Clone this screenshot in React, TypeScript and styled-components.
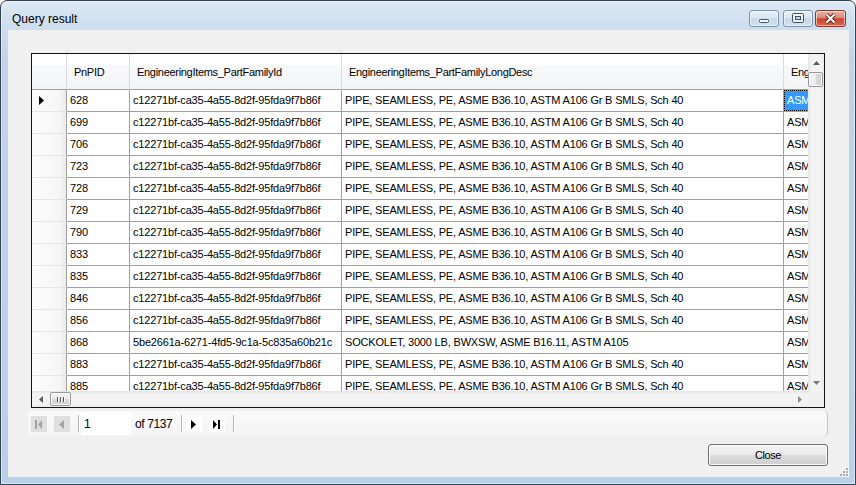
import React from 'react';
import styled, { createGlobalStyle } from 'styled-components';

const GlobalStyle = createGlobalStyle`
  html, body {
    margin: 0;
    padding: 0;
    background: #ffffff;
  }
  body {
    font-family: "Liberation Sans", Arial, sans-serif;
  }
  * {
    box-sizing: border-box;
  }
`;

const GUID_A = 'c12271bf-ca35-4a55-8d2f-95fda9f7b86f';
const GUID_B = '5be2661a-6271-4fd5-9c1a-5c835a60b21c';
const PIPE = 'PIPE, SEAMLESS, PE, ASME B36.10, ASTM A106 Gr B SMLS, Sch 40';
const SOCK = 'SOCKOLET, 3000 LB, BWXSW, ASME B16.11, ASTM A105';

const rows = [
  { id: '628', family: GUID_A, desc: PIPE, std: 'ASME B36.10' },
  { id: '699', family: GUID_A, desc: PIPE, std: 'ASME B36.10' },
  { id: '706', family: GUID_A, desc: PIPE, std: 'ASME B36.10' },
  { id: '723', family: GUID_A, desc: PIPE, std: 'ASME B36.10' },
  { id: '728', family: GUID_A, desc: PIPE, std: 'ASME B36.10' },
  { id: '729', family: GUID_A, desc: PIPE, std: 'ASME B36.10' },
  { id: '790', family: GUID_A, desc: PIPE, std: 'ASME B36.10' },
  { id: '833', family: GUID_A, desc: PIPE, std: 'ASME B36.10' },
  { id: '835', family: GUID_A, desc: PIPE, std: 'ASME B36.10' },
  { id: '846', family: GUID_A, desc: PIPE, std: 'ASME B36.10' },
  { id: '856', family: GUID_A, desc: PIPE, std: 'ASME B36.10' },
  { id: '868', family: GUID_B, desc: SOCK, std: 'ASME B16.11' },
  { id: '883', family: GUID_A, desc: PIPE, std: 'ASME B36.10' },
  { id: '885', family: GUID_A, desc: PIPE, std: 'ASME B36.10' },
];

const COLUMNS = '35px 63px 212px 442px 220px';

const Window = styled.div`
  width: 856px;
  height: 485px;
  display: flex;
  flex-direction: column;
  border: 1px solid #35424f;
  border-radius: 7px 7px 0 0;
  background: linear-gradient(180deg, #dde8f4 0px, #d0e0f0 20px, #bfd4ea 60px, #b9d1ea 100%);
  box-shadow: inset 0 0 0 1px rgba(255, 255, 255, 0.45);
  overflow: hidden;
`;

const TitleBar = styled.div`
  height: 29px;
  flex-shrink: 0;
  display: flex;
  align-items: flex-start;
  justify-content: space-between;
  padding: 0 9px 0 11px;
`;

const Title = styled.div`
  margin-top: 11px;
  font-size: 12px;
  line-height: 14px;
  color: #000000;
`;

const CaptionGroup = styled.div`
  display: flex;
  margin-top: 9px;
`;

const CaptionButton = styled.div<{ $close?: boolean; $gap?: number }>`
  width: ${({ $close }) => ($close ? 31 : 30)}px;
  height: 17px;
  margin-left: ${({ $gap }) => $gap ?? 0}px;
  border: 1px solid ${({ $close }) => ($close ? '#7a3b30' : '#7f93ab')};
  border-radius: 3px;
  background: ${({ $close }) =>
    $close
      ? 'linear-gradient(180deg, #eab1a5 0%, #dd8a78 45%, #c8472f 52%, #d9664b 100%)'
      : 'linear-gradient(180deg, #e9f0f7 0%, #dbe5f0 45%, #c9d7e6 52%, #d3e0ee 100%)'};
  box-shadow: inset 0 0 0 1px rgba(255, 255, 255, 0.55);
  display: flex;

  svg {
    display: block;
  }
`;

const Client = styled.div`
  flex: 1;
  margin: 0 6px 7px 7px;
  padding: 23px 21px 0 20px;
  background: #f0f0f0;
  display: flex;
  flex-direction: column;
  position: relative;
`;

const GridBox = styled.div`
  margin-left: 3px;
  width: 794px;
  height: 355px;
  border: 1px solid #141414;
  background: #ffffff;
  display: grid;
  grid-template-columns: 776px 16px;
  grid-template-rows: 337px 16px;
`;

const Viewport = styled.div`
  overflow: hidden;
  background: #ffffff;
`;

const HeaderRow = styled.div`
  display: grid;
  grid-template-columns: ${COLUMNS};
  height: 36px;
`;

const HeaderCell = styled.div`
  height: 36px;
  padding: 2px 0 0 7px;
  line-height: 33px;
  font-size: 11px;
  letter-spacing: -0.3px;
  color: #000000;
  white-space: nowrap;
  overflow: hidden;
  border-right: 1px solid #d8dce2;
  border-bottom: 1px solid #a0a0a0;
  background: linear-gradient(180deg, #ffffff 0%, #ffffff 32%, #f8f9fa 32%, #f3f4f6 100%);
`;

const DataRow = styled.div`
  display: grid;
  grid-template-columns: ${COLUMNS};
  height: 22px;
`;

const RowHeader = styled.div`
  height: 22px;
  padding-left: 7px;
  display: flex;
  align-items: center;
  border-right: 1px solid #a0a0a0;
  border-bottom: 1px solid #e6e6e6;
  background: linear-gradient(90deg, #fdfdfd 0%, #f6f6f6 80%, #ebebeb 100%);

  svg {
    display: block;
    margin-top: -1px;
  }
`;

const Cell = styled.div<{ $selected?: boolean }>`
  position: relative;
  height: 22px;
  padding: 0 3px;
  line-height: 21px;
  font-size: 11px;
  letter-spacing: -0.18px;
  white-space: nowrap;
  overflow: hidden;
  color: ${({ $selected }) => ($selected ? '#ffffff' : '#000000')};
  background: ${({ $selected }) => ($selected ? '#3399ff' : '#ffffff')};
  border-right: 1px solid #a0a0a0;
  border-bottom: 1px solid #a0a0a0;

  &::after {
    content: '';
    display: ${({ $selected }) => ($selected ? 'block' : 'none')};
    position: absolute;
    left: 0;
    top: 0;
    right: 0;
    bottom: 0;
    border: 1px dotted #000000;
  }
`;

const VScroll = styled.div`
  grid-column: 2;
  grid-row: 1;
  display: flex;
  flex-direction: column;
  background: linear-gradient(90deg, #e4e4e4 0%, #f3f3f3 20%, #f3f3f3 80%, #ebebeb 100%);
`;

const HScroll = styled.div`
  grid-column: 1;
  grid-row: 2;
  display: flex;
  background: linear-gradient(180deg, #e4e4e4 0%, #f3f3f3 20%, #f3f3f3 80%, #ebebeb 100%);
`;

const ScrollCorner = styled.div`
  grid-column: 2;
  grid-row: 2;
  background: #f0f0f0;
`;

const ArrowBox = styled.div<{ $vertical?: boolean }>`
  flex-shrink: 0;
  width: ${({ $vertical }) => ($vertical ? '100%' : '17px')};
  height: ${({ $vertical }) => ($vertical ? '17px' : '100%')};
  display: flex;
  align-items: center;
  justify-content: center;

  svg {
    display: block;
  }
`;

const Spacer = styled.div`
  flex: 1;
`;

const Thumb = styled.div<{ $vertical?: boolean }>`
  flex-shrink: 0;
  border: 1px solid #979797;
  border-radius: 2px;
  box-shadow: inset 0 0 0 1px #fbfbfb;
  display: flex;
  align-items: center;
  justify-content: center;
  gap: 2px;
  ${({ $vertical }) =>
    $vertical
      ? `
    width: 15px;
    height: 15px;
    margin: 1px 1px 0 0;
    background: linear-gradient(90deg, #f4f4f4 0%, #ebebeb 50%, #dbdbdb 51%, #cfcfcf 100%);
  `
      : `
    width: 21px;
    height: 14px;
    margin: 1px 0 0 1px;
    background: linear-gradient(180deg, #f4f4f4 0%, #ebebeb 50%, #dbdbdb 51%, #cfcfcf 100%);
  `}
`;

const GripLine = styled.span`
  width: 1px;
  height: 5px;
  background: #555555;
  box-shadow: 1px 0 0 #ffffff;
`;

const Navigator = styled.div`
  width: 800px;
  height: 25px;
  margin-top: 3px;
  display: flex;
  align-items: center;
  border-radius: 0 4px 4px 0;
  background: linear-gradient(180deg, #fafafa 0%, #f4f4f4 100%);
  box-shadow: inset -1px 0 0 #c6c6c6;
  font-size: 12px;
  color: #000000;
`;

const NavButton = styled.div`
  width: 23px;
  height: 22px;
  padding-left: 3px;
  display: flex;
  align-items: center;

  svg {
    display: block;
  }
`;

const NavSeparator = styled.div`
  width: 6px;
  height: 17px;
  background: linear-gradient(90deg, transparent 4px, #b7b7b7 4px, #b7b7b7 5px, #ffffff 5px);
`;

const PositionBox = styled.div`
  width: 50px;
  height: 22px;
  margin-left: 1px;
  padding-left: 3px;
  line-height: 22px;
  background: #ffffff;
`;

const CountLabel = styled.div`
  width: 46px;
  padding-left: 4px;
  letter-spacing: -0.4px;
  white-space: nowrap;
`;

const CloseButton = styled.div`
  align-self: flex-end;
  width: 120px;
  height: 22px;
  margin-top: 8px;
  border: 1px solid #707070;
  border-radius: 3px;
  background: linear-gradient(180deg, #f2f2f2 0%, #ebebeb 50%, #dddddd 51%, #cfcfcf 100%);
  box-shadow: inset 0 0 0 1px #fbfbfb;
  display: flex;
  align-items: center;
  justify-content: center;
  font-size: 11px;
  letter-spacing: -0.4px;
  color: #000000;
`;

const SizeGrip = styled.svg`
  position: absolute;
  right: 0;
  bottom: 0;
  display: block;
`;

const NavIcon: React.FC<{ kind: 'first' | 'prev' | 'next' | 'last'; disabled?: boolean }> = ({
  kind,
  disabled,
}) => {
  const fill = disabled ? '#a3a3a3' : '#000000';
  return (
    <svg width="16" height="16" viewBox="0 0 16 16">
      <rect width="16" height="16" fill={disabled ? '#dfdfdf' : '#ffffff'} />
      {kind === 'first' && (
        <>
          <rect x="4" y="4" width="2" height="9" fill={fill} />
          <polygon points="11,4 7,8.5 11,13" fill={fill} />
        </>
      )}
      {kind === 'prev' && <polygon points="10,4 5,8.5 10,13" fill={fill} />}
      {kind === 'next' && <polygon points="5,4 10,8.5 5,13" fill={fill} />}
      {kind === 'last' && (
        <>
          <polygon points="4,4 8,8.5 4,13" fill={fill} />
          <rect x="9" y="4" width="2" height="9" fill={fill} />
        </>
      )}
    </svg>
  );
};

const App: React.FC = () => {
  return (
    <>
      <GlobalStyle />
      <Window>
        <TitleBar>
          <Title>Query result</Title>
          <CaptionGroup>
            <CaptionButton>
              <svg width="28" height="15" viewBox="0 0 28 15">
                <rect x="9.5" y="8.5" width="9" height="3" rx="1" fill="#f5f8fb" stroke="#3f526a" />
              </svg>
            </CaptionButton>
            <CaptionButton $gap={4}>
              <svg width="28" height="15" viewBox="0 0 28 15">
                <rect x="8.5" y="2.5" width="11" height="9" rx="1" fill="#f5f8fb" stroke="#3f526a" />
                <rect x="11.5" y="5.5" width="5" height="3" fill="#c6d4e4" stroke="#3f526a" />
              </svg>
            </CaptionButton>
            <CaptionButton $close $gap={2}>
              <svg width="29" height="15" viewBox="0 0 29 15">
                <path d="M10.5 3.5 L18.5 11.5 M18.5 3.5 L10.5 11.5" stroke="#5b2a22" strokeWidth="4" />
                <path d="M10.5 3.5 L18.5 11.5 M18.5 3.5 L10.5 11.5" stroke="#ffffff" strokeWidth="2" />
              </svg>
            </CaptionButton>
          </CaptionGroup>
        </TitleBar>

        <Client>
          <GridBox>
            <Viewport>
              <HeaderRow>
                <HeaderCell />
                <HeaderCell>PnPID</HeaderCell>
                <HeaderCell>EngineeringItems_PartFamilyId</HeaderCell>
                <HeaderCell>EngineeringItems_PartFamilyLongDesc</HeaderCell>
                <HeaderCell>EngineeringItems_Standard</HeaderCell>
              </HeaderRow>
              {rows.map((row, i) => (
                <DataRow key={row.id}>
                  <RowHeader>
                    {i === 0 && (
                      <svg width="5" height="9" viewBox="0 0 5 9">
                        <polygon points="0,0 5,4.5 0,9" fill="#000000" />
                      </svg>
                    )}
                  </RowHeader>
                  <Cell>{row.id}</Cell>
                  <Cell>{row.family}</Cell>
                  <Cell>{row.desc}</Cell>
                  <Cell $selected={i === 0}>{row.std}</Cell>
                </DataRow>
              ))}
            </Viewport>

            <VScroll>
              <ArrowBox $vertical>
                <svg width="7" height="4" viewBox="0 0 7 4">
                  <polygon points="0,4 3.5,0 7,4" fill="#5c5c5c" />
                </svg>
              </ArrowBox>
              <Thumb $vertical />
              <Spacer />
              <ArrowBox $vertical>
                <svg width="7" height="4" viewBox="0 0 7 4">
                  <polygon points="0,0 7,0 3.5,4" fill="#7c7c7c" />
                </svg>
              </ArrowBox>
            </VScroll>

            <HScroll>
              <ArrowBox>
                <svg width="4" height="7" viewBox="0 0 4 7">
                  <polygon points="4,0 0,3.5 4,7" fill="#5c5c5c" />
                </svg>
              </ArrowBox>
              <Thumb>
                <GripLine />
                <GripLine />
                <GripLine />
              </Thumb>
              <Spacer />
              <ArrowBox>
                <svg width="4" height="7" viewBox="0 0 4 7">
                  <polygon points="0,0 4,3.5 0,7" fill="#8a8a8a" />
                </svg>
              </ArrowBox>
            </HScroll>

            <ScrollCorner />
          </GridBox>

          <Navigator>
            <NavButton>
              <NavIcon kind="first" disabled />
            </NavButton>
            <NavButton>
              <NavIcon kind="prev" disabled />
            </NavButton>
            <NavSeparator />
            <PositionBox>1</PositionBox>
            <CountLabel>of 7137</CountLabel>
            <NavSeparator />
            <NavButton>
              <NavIcon kind="next" />
            </NavButton>
            <NavButton>
              <NavIcon kind="last" />
            </NavButton>
            <NavSeparator />
          </Navigator>

          <CloseButton>Close</CloseButton>

          <SizeGrip width="11" height="11" viewBox="0 0 11 11">
            {[
              [8, 2],
              [5, 5],
              [8, 5],
              [2, 8],
              [5, 8],
              [8, 8],
            ].map(([x, y]) => (
              <g key={`${x}-${y}`}>
                <rect x={x + 1} y={y + 1} width="2" height="2" fill="#ffffff" />
                <rect x={x} y={y} width="2" height="2" fill="#a9a9a9" />
              </g>
            ))}
          </SizeGrip>
        </Client>
      </Window>
    </>
  );
};

export default App;
